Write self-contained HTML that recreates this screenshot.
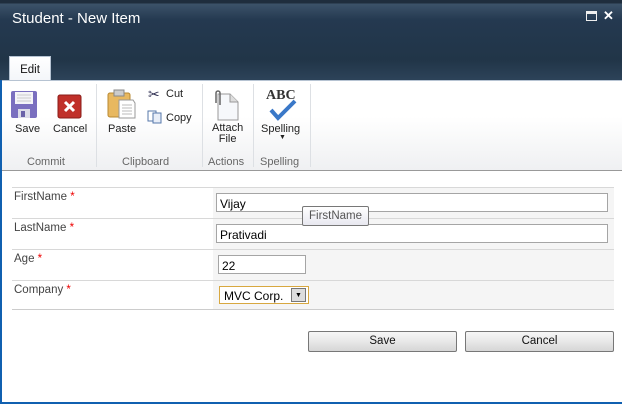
<!DOCTYPE html>
<html><head><style>
*{margin:0;padding:0;box-sizing:border-box}
body{width:622px;height:404px;overflow:hidden;background:#fff;font-family:"Liberation Sans",sans-serif;position:relative}
.abs{position:absolute}
.title{left:0;top:0;width:622px;height:80px;background:linear-gradient(#1f2d3d 0,#1f2d3d 3px,#3c5269 4px,#243950 20px,#213548 60px,#2c4258 79px);}
.ribbon{left:0;top:80px;width:622px;height:91px;background:linear-gradient(#fff 40%,#eff0f2);border-top:1px solid #b6c3d2;border-bottom:1px solid #999}
.t{font-size:11px;color:#222;position:absolute;white-space:nowrap}
.g{font-size:11px;color:#666;position:absolute;top:156px}
.sep{position:absolute;top:84px;width:1px;height:83px;background:#dde0e4}
.row{position:absolute;left:12px;width:602px;border-top:1px solid #d8d8d8}
.lab{position:absolute;left:14px;font-size:11.5px;color:#444}
.lab b{color:#e00;font-weight:normal}
.inp{position:absolute;background:#fff;border:1px solid #a5a5a5;font-size:12px;color:#000;padding:3px 0 0 3px}
.btn{position:absolute;top:331px;width:149px;height:21px;border:1px solid #777;border-radius:2px;background:linear-gradient(#f6f6f6,#e8e8e8 50%,#d6d6d6);font-size:11.5px;text-align:center;line-height:18px;color:#111}
</style></head><body>
<div class="abs title"></div>
<div class="abs" style="left:12px;top:10px;color:#fff;font-size:15px">Student - New Item</div>
<div class="abs" style="left:586px;top:11px;width:11px;height:10px;border:1px solid #eee;border-top-width:3px"></div>
<div class="abs" style="left:603px;top:8px;color:#fff;font-size:13px;font-weight:bold">✕</div>
<div class="abs" style="left:9px;top:56px;width:42px;height:25px;background:linear-gradient(#fff,#f3f6f9);border:1px solid #b6c3d2;border-bottom:none;font-size:11.5px;color:#111;text-align:center;padding-top:7px">Edit</div>
<div class="abs ribbon"></div>
<div class="abs" style="left:0;top:80px;width:2px;height:324px;background:#1060b0"></div>
<div class="abs" style="left:0;top:402px;width:622px;height:2px;background:#1060b0"></div>
<svg class="abs" style="left:10px;top:90px" width="30" height="30"><rect x="1" y="1" width="26" height="27" rx="2" fill="#7a6fbf"/><rect x="5" y="2" width="18" height="12" fill="#f4f4f8"/><line x1="7" y1="5" x2="21" y2="5" stroke="#ccc"/><line x1="7" y1="8" x2="21" y2="8" stroke="#ccc"/><line x1="7" y1="11" x2="21" y2="11" stroke="#ccc"/><rect x="8" y="19" width="12" height="9" fill="#dcdce8"/><rect x="11" y="21" width="4" height="6" fill="#6a62a8"/></svg>
<svg class="abs" style="left:57px;top:94px" width="26" height="26"><rect x="1" y="1" width="23" height="23" rx="2" fill="#c0302a" stroke="#8a1c18"/><path d="M8 8l9 9M17 8l-9 9" stroke="#fff" stroke-width="3"/></svg>
<div class="t" style="left:15px;top:123px">Save</div>
<div class="t" style="left:53px;top:123px">Cancel</div>
<div class="g" style="left:27px">Commit</div>
<div class="sep" style="left:96px"></div>
<svg class="abs" style="left:107px;top:88px" width="30" height="32"><rect x="1" y="5" width="22" height="24" rx="2" fill="#e8b860" stroke="#b88830"/><rect x="7" y="2" width="10" height="6" fill="#ccc" stroke="#888"/><path d="M12 12h14l2 3v15h-16z" fill="#fff" stroke="#999"/><path d="M15 17h10M15 20h10M15 23h10M15 26h10" stroke="#bbb"/></svg>
<div class="t" style="left:108px;top:123px">Paste</div>
<div class="t" style="left:148px;top:86px;font-size:14px;color:#335">✂</div>
<div class="t" style="left:166px;top:88px">Cut</div>
<svg class="abs" style="left:147px;top:110px" width="16" height="14"><rect x="1" y="1" width="8" height="10" fill="#fff" stroke="#5577aa"/><rect x="6" y="3" width="8" height="10" fill="#e8eef8" stroke="#5577aa"/></svg>
<div class="t" style="left:166px;top:112px">Copy</div>
<div class="g" style="left:122px">Clipboard</div>
<div class="sep" style="left:202px"></div>
<svg class="abs" style="left:212px;top:89px" width="30" height="32"><path d="M6 5h12l8 8v18h-20z" fill="#f6f8fb" stroke="#999"/><path d="M18 5v8h8" fill="#ddd" stroke="#999"/><path d="M4 14V4a2 2 0 014 0v12" fill="none" stroke="#666" stroke-width="1.5"/></svg>
<div class="t" style="left:212px;top:123px;text-align:center;line-height:11px">Attach<br>File</div>
<div class="g" style="left:208px">Actions</div>
<div class="sep" style="left:253px"></div>
<div class="t" style="left:266px;top:88px;font-family:'Liberation Serif',serif;font-weight:bold;font-size:14px;color:#333">ABC</div>
<svg class="abs" style="left:268px;top:98px" width="30" height="24"><path d="M3 12l7 8L27 3" fill="none" stroke="#3a78c8" stroke-width="4"/></svg>
<div class="t" style="left:261px;top:123px">Spelling</div>
<div class="t" style="left:279px;top:134px;font-size:7px">▼</div>
<div class="g" style="left:260px">Spelling</div>
<div class="sep" style="left:310px"></div>
<div class="abs" style="left:213px;top:187px;width:401px;height:122px;background:#f5f5f5"></div>
<div class="row" style="top:187px"></div>
<div class="row" style="top:218px"></div>
<div class="row" style="top:249px"></div>
<div class="row" style="top:280px"></div>
<div class="row" style="top:309px;border-color:#ccc"></div>
<div class="lab" style="top:191px">FirstName <b>*</b></div>
<div class="lab" style="top:222px">LastName <b>*</b></div>
<div class="lab" style="top:253px">Age <b>*</b></div>
<div class="lab" style="top:284px">Company <b>*</b></div>
<div class="inp" style="left:216px;top:193px;width:392px;height:19px">Vijay</div>
<div class="inp" style="left:216px;top:224px;width:392px;height:19px">Prativadi</div>
<div class="inp" style="left:218px;top:255px;width:88px;height:19px">22</div>
<div class="inp" style="left:219px;top:286px;width:90px;height:18px;border:1px solid #d8a840;padding:2px 0 0 4px">MVC Corp.</div>
<div class="abs" style="left:291px;top:288px;width:15px;height:14px;background:#ddd;border:1px solid #777;font-size:7px;text-align:center;line-height:13px">▼</div>
<div class="abs" style="left:302px;top:206px;width:67px;height:20px;background:linear-gradient(#fff,#e8e8f0);border:1px solid #777;border-radius:2px;font-size:11.5px;color:#555;text-align:center;line-height:18px">FirstName</div>
<div class="btn" style="left:308px">Save</div>
<div class="btn" style="left:465px">Cancel</div>
</body></html>
